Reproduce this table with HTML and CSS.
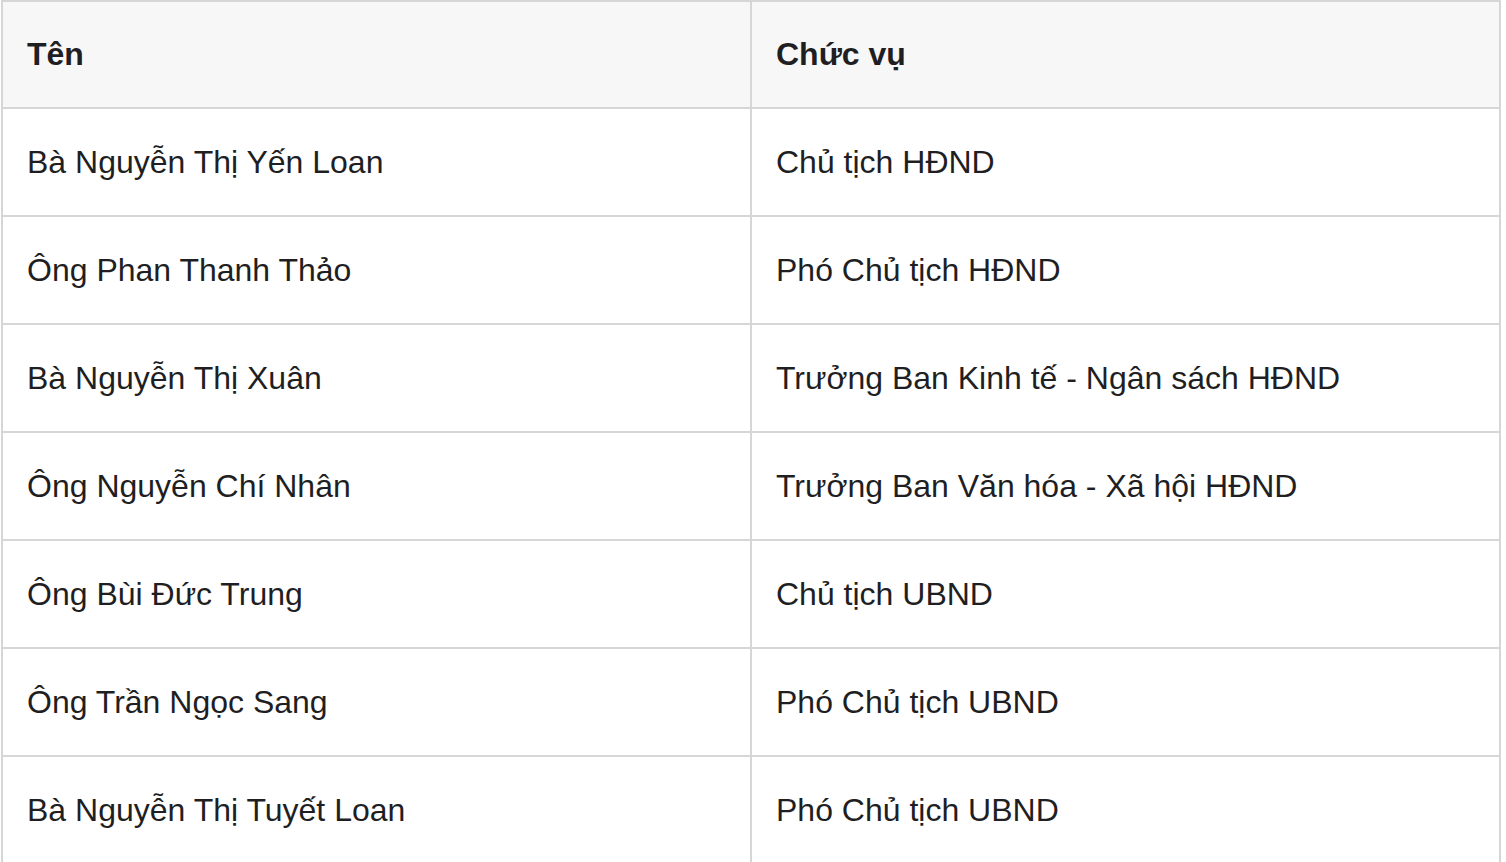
FILE: index.html
```html
<!DOCTYPE html>
<html lang="vi">
<head>
<meta charset="utf-8">
<link rel="stylesheet" href="styles.css">
</head>
<body>
<table class="tbl">
  <thead>
    <tr><th>Tên</th><th>Chức vụ</th></tr>
  </thead>
  <tbody>
    <tr><td>Bà Nguyễn Thị Yến Loan</td><td>Chủ tịch HĐND</td></tr>
    <tr><td>Ông Phan Thanh Thảo</td><td>Phó Chủ tịch HĐND</td></tr>
    <tr><td>Bà Nguyễn Thị Xuân</td><td>Trưởng Ban Kinh tế - Ngân sách HĐND</td></tr>
    <tr><td>Ông Nguyễn Chí Nhân</td><td>Trưởng Ban Văn hóa - Xã hội HĐND</td></tr>
    <tr><td>Ông Bùi Đức Trung</td><td>Chủ tịch UBND</td></tr>
    <tr><td>Ông Trần Ngọc Sang</td><td>Phó Chủ tịch UBND</td></tr>
    <tr><td>Bà Nguyễn Thị Tuyết Loan</td><td>Phó Chủ tịch UBND</td></tr>
  </tbody>
</table>
</body>
</html>
```
FILE: styles.css
```css
html, body {
  margin: 0;
  padding: 0;
  background: #fff;
}
body {
  padding-left: 1px;
  font-family: "Liberation Sans", Arial, sans-serif;
  color: #1f1f23;
}
.tbl {
  width: 1500px;
  border-collapse: collapse;
  table-layout: fixed;
  font-size: 32px;
}
.tbl th,
.tbl td {
  width: 50%;
  height: 108px;
  padding: 0 24px;
  border: 2px solid #d6d6d6;
  text-align: left;
  vertical-align: middle;
  box-sizing: border-box;
}
.tbl th {
  height: 107px;
  background: #f7f7f7;
  font-weight: bold;
}
.tbl td {
  font-weight: normal;
}
```
